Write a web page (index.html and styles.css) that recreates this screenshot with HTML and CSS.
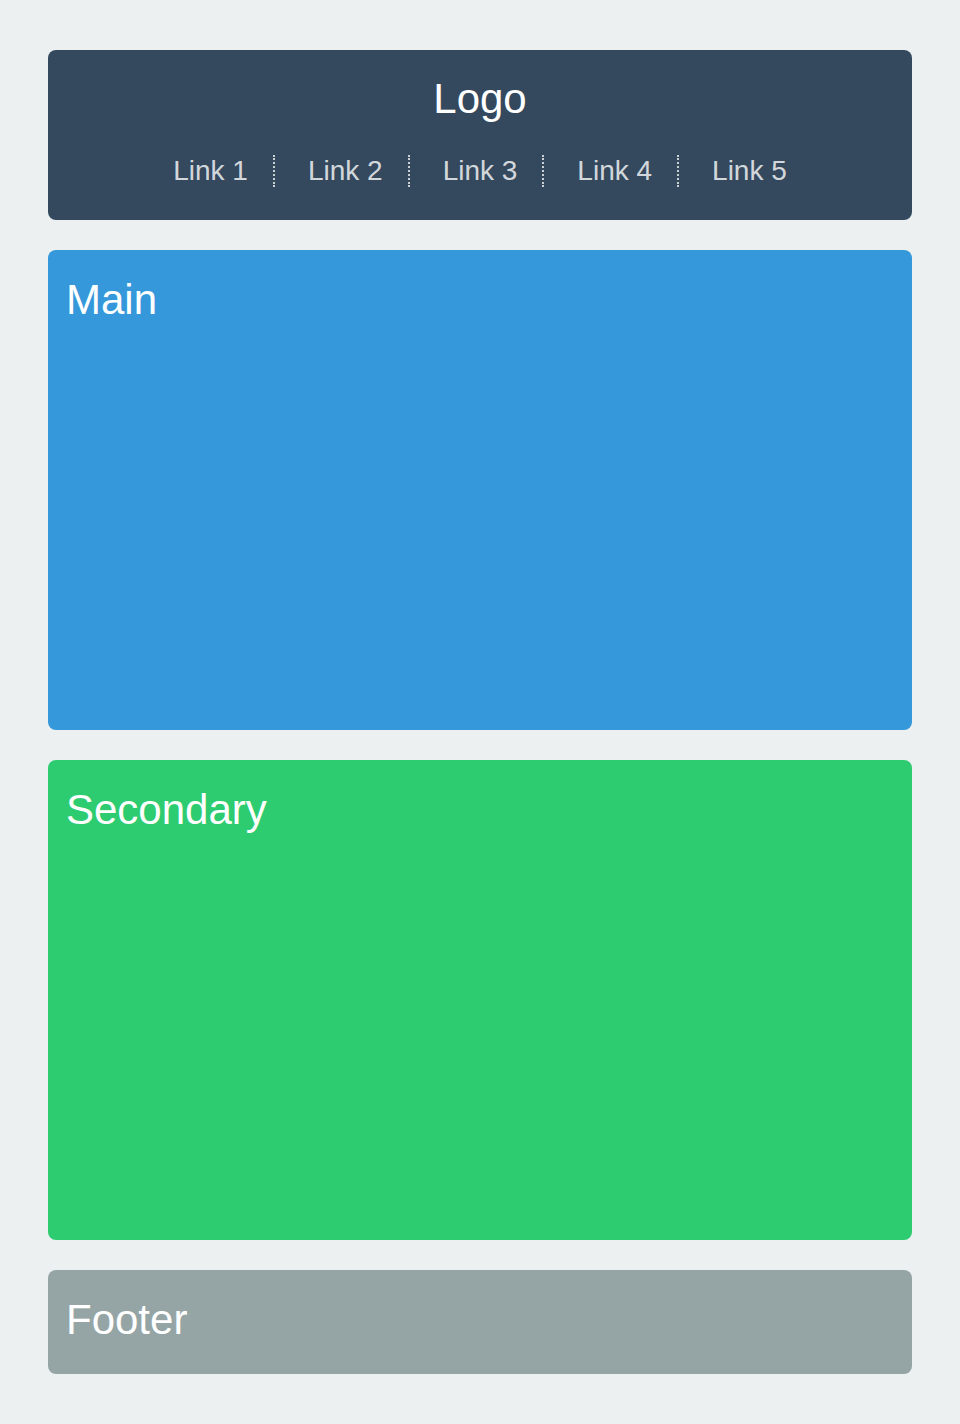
FILE: index.html
```html
<!DOCTYPE html>
<html lang="en">
<head>
<meta charset="utf-8">
<title>Layout</title>
<link rel="stylesheet" href="styles.css">
</head>
<body>
<div class="page">
  <header class="header">
    <div class="logo">Logo</div>
    <ul class="nav">
      <li class="nav-item"><a href="#">Link 1</a></li>
      <li class="nav-item"><a href="#">Link 2</a></li>
      <li class="nav-item"><a href="#">Link 3</a></li>
      <li class="nav-item"><a href="#">Link 4</a></li>
      <li class="nav-item"><a href="#">Link 5</a></li>
    </ul>
  </header>
  <section class="box box-main"><h2 class="box-title">Main</h2></section>
  <section class="box box-secondary"><h2 class="box-title">Secondary</h2></section>
  <footer class="box box-footer"><h2 class="box-title">Footer</h2></footer>
</div>
</body>
</html>
```

FILE: styles.css
```css
html, body {
  margin: 0;
  padding: 0;
}
body {
  background: #ecf0f1;
  font-family: "Liberation Sans", Arial, Helvetica, sans-serif;
  color: #fff;
}
.page {
  padding: 50px 48px;
  display: flex;
  flex-direction: column;
  gap: 30px;
}
.header {
  background: #34495e;
  border-radius: 8px;
  padding: 26px 0 33px;
  display: flex;
  flex-direction: column;
  align-items: center;
}
.logo {
  font-size: 42px;
  line-height: 46px;
  margin-bottom: 33px;
}
.nav {
  list-style: none;
  margin: 0;
  padding: 0;
  display: flex;
  justify-content: center;
}
.nav-item {
  font-size: 28px;
  line-height: 32px;
}
.nav-item:not(:last-child) {
  padding-right: 25px;
  border-right: 2px dotted rgba(255, 255, 255, 0.75);
}
.nav-item:not(:first-child) {
  padding-left: 33px;
}
.nav-item a {
  color: rgba(255, 255, 255, 0.8);
  text-decoration: none;
}
.box {
  border-radius: 8px;
  padding: 27px 18px;
  box-sizing: border-box;
}
.box-title {
  margin: 0;
  font-size: 42px;
  line-height: 46px;
  font-weight: normal;
}
.box-main {
  background: #3498db;
  height: 480px;
}
.box-secondary {
  background: #2ecc71;
  height: 480px;
}
.box-footer {
  background: #95a5a6;
  padding-bottom: 31px;
}
```
